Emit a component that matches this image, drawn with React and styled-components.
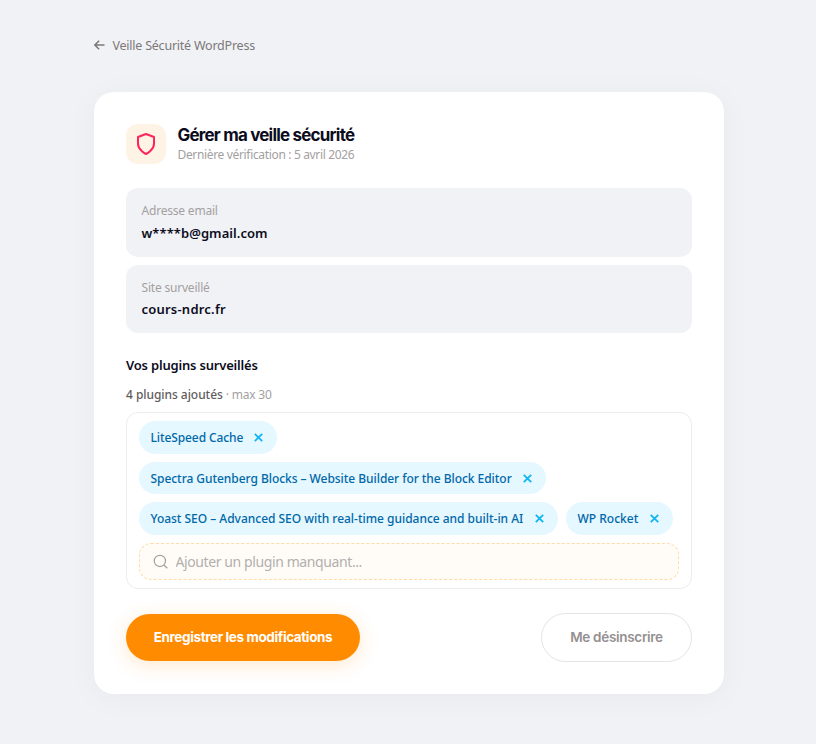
import React from "react";
import styled, { createGlobalStyle } from "styled-components";

const plugins = [
  { name: "LiteSpeed Cache", width: 138, spacing: -0.1 },
  {
    name: "Spectra Gutenberg Blocks – Website Builder for the Block Editor",
    width: 407,
    spacing: -0.05,
    top: 2,
  },
  {
    name: "Yoast SEO – Advanced SEO with real-time guidance and built-in AI",
    width: 419,
    spacing: -0.02,
    top: 1,
  },
  { name: "WP Rocket", width: 107, spacing: 0, top: 1 },
];

const fields = [
  { label: "Adresse email", value: "w****b@gmail.com", height: 69, gap: 2, spacing: 0.06 },
  { label: "Site surveillé", value: "cours-ndrc.fr", height: 68, gap: 1, spacing: 0.22 },
];

const App = () => {
  return (
    <>
      <GlobalStyle />
      <Page>
        <BackLink href="#">
          <ArrowIcon viewBox="0 0 12 12">
            <path d="M10.5 6H1M5.1 1.8L.9 6l4.2 4.2" />
          </ArrowIcon>
          <span>Veille Sécurité WordPress</span>
        </BackLink>

        <Card>
          <Header>
            <IconBox>
              <ShieldIcon viewBox="0 0 24 24">
                <path d="M12 22s8-4 8-10V5l-8-3-8 3v7c0 6 8 10 8 10z" />
              </ShieldIcon>
            </IconBox>
            <div>
              <Title>Gérer ma veille sécurité</Title>
              <Subtitle>Dernière vérification : 5 avril 2026</Subtitle>
            </div>
          </Header>

          <Fields>
            {fields.map((f) => (
              <Field key={f.label} $height={f.height}>
                <FieldLabel>{f.label}</FieldLabel>
                <FieldValue $gap={f.gap} $spacing={f.spacing}>
                  {f.value}
                </FieldValue>
              </Field>
            ))}
          </Fields>

          <SectionTitle>Vos plugins surveillés</SectionTitle>
          <Count>
            <strong>4 plugins ajoutés</strong> · max 30
          </Count>

          <PluginBox>
            {plugins.map((p) => (
              <Chip key={p.name} $width={p.width} $top={p.top}>
                <ChipName $spacing={p.spacing}>{p.name}</ChipName>
                <Remove aria-label="Retirer">
                  <svg width="9" height="9" viewBox="0 0 9 9">
                    <path d="M.8.8l7.4 7.4M8.2.8L.8 8.2" />
                  </svg>
                </Remove>
              </Chip>
            ))}
            <Search>
              <SearchIcon viewBox="0 0 24 24">
                <circle cx="11" cy="11" r="9" />
                <path d="M17.5 17.5L22.8 22.8" />
              </SearchIcon>
              <SearchInput placeholder="Ajouter un plugin manquant..." />
            </Search>
          </PluginBox>

          <Actions>
            <SaveButton>Enregistrer les modifications</SaveButton>
            <LeaveButton>Me désinscrire</LeaveButton>
          </Actions>
        </Card>
      </Page>
    </>
  );
};

export default App;

// ---------------- Styled Components ----------------
const GlobalStyle = createGlobalStyle`
  *, *::before, *::after {
    box-sizing: border-box;
  }
  body {
    margin: 0;
    background: #f1f2f6;
    font-family: "Noto Sans", "Open Sans", sans-serif;
    color: #0c0c1d;
  }
  button, input {
    font-family: inherit;
  }
`;

const Page = styled.main`
  width: 630px;
  min-height: 744px;
  margin: 0 92px 0 94px;
  padding-top: 35px;
`;

const BackLink = styled.a`
  display: flex;
  align-items: center;
  gap: 6.5px;
  height: 20px;
  margin-bottom: 37px;
  font-size: 12.5px;
  letter-spacing: -0.23px;
  color: #7c7878;
  text-decoration: none;
`;

const ArrowIcon = styled.svg`
  width: 12px;
  height: 12px;
  fill: none;
  stroke: currentColor;
  stroke-width: 1.5;
`;

const Card = styled.section`
  height: 602px;
  padding: 32px;
  border-radius: 20px;
  background: #fff;
  box-shadow: 0 4px 32px rgba(12, 12, 29, 0.04);
`;

const Header = styled.header`
  display: flex;
  align-items: center;
  gap: 11.5px;
  height: 40px;
  margin-bottom: 24px;
`;

const IconBox = styled.div`
  display: flex;
  align-items: center;
  justify-content: center;
  width: 40px;
  height: 40px;
  border-radius: 12px;
  background: #fff3e6;
`;

const ShieldIcon = styled.svg`
  width: 24px;
  height: 24px;
  fill: none;
  stroke: #ff2559;
  stroke-width: 2;
  stroke-linejoin: round;
`;

const Title = styled.h1`
  margin: 0;
  font-family: Inter, sans-serif;
  font-size: 17px;
  font-weight: 700;
  line-height: 21px;
  letter-spacing: -0.8px;
`;

const Subtitle = styled.p`
  margin: 0;
  font-size: 12px;
  line-height: 17px;
  letter-spacing: -0.34px;
  color: #a3a0a0;
`;

const Fields = styled.div`
  display: flex;
  flex-direction: column;
  gap: 8px;
  margin-bottom: 22px;
`;

const Field = styled.div`
  height: ${(p) => p.$height}px;
  padding: 13px 15.5px 0;
  border-radius: 12px;
  background: #f1f2f6;
`;

const FieldLabel = styled.div`
  font-size: 12px;
  line-height: 20px;
  letter-spacing: -0.2px;
  color: #a3a0a0;
`;

const FieldValue = styled.div`
  padding-top: ${(p) => p.$gap}px;
  font-size: 13px;
  font-weight: 600;
  line-height: 20px;
  letter-spacing: ${(p) => p.$spacing}px;
`;

const SectionTitle = styled.h2`
  margin: 0 0 10px;
  font-size: 13px;
  font-weight: 600;
  line-height: 20px;
  letter-spacing: -0.19px;
`;

const Count = styled.p`
  margin: 0 0 7px;
  font-size: 12px;
  line-height: 20px;
  letter-spacing: -0.2px;
  color: #a3a0a0;

  strong {
    font-weight: 500;
    letter-spacing: -0.05px;
    color: #5f5c5c;
  }
`;

const PluginBox = styled.div`
  display: flex;
  flex-wrap: wrap;
  gap: 8px;
  padding: 8px 12px;
  border: 1px solid #ededf0;
  border-radius: 12px;
`;

const Chip = styled.div`
  display: flex;
  align-items: center;
  justify-content: space-between;
  width: ${(p) => p.$width}px;
  height: 32.6px;
  padding: ${(p) => p.$top || 0}px 14.5px 0 11.5px;
  border-radius: 17px;
  background: #e5f7ff;
`;

const ChipName = styled.span`
  font-size: 12px;
  font-weight: 500;
  letter-spacing: ${(p) => p.$spacing}px;
  color: #0068a8;
  white-space: nowrap;
`;

const Remove = styled.button`
  display: flex;
  padding: 0;
  border: 0;
  background: none;

  svg {
    fill: none;
    stroke: #10b5f5;
    stroke-width: 1.8;
  }
`;

const Search = styled.label`
  display: flex;
  align-items: center;
  gap: 8px;
  width: 100%;
  height: 37px;
  padding: 0 12.5px;
  border: 1px dashed #ffdba8;
  border-radius: 12px;
  background: #fffcf7;
`;

const SearchIcon = styled.svg`
  flex: none;
  width: 15px;
  height: 15px;
  fill: none;
  stroke: #a3a0a0;
  stroke-width: 2;
`;

const SearchInput = styled.input`
  flex: 1;
  padding: 0;
  border: 0;
  outline: 0;
  background: none;
  font-size: 14px;
  letter-spacing: -0.4px;

  &::placeholder {
    color: #b3afaf;
    opacity: 1;
  }
`;

const Actions = styled.div`
  display: flex;
  align-items: center;
  justify-content: space-between;
  margin-top: 24px;
`;

const Button = styled.button`
  padding-bottom: 2px;
  font-family: Inter, sans-serif;
  font-size: 13.5px;
  font-weight: 600;
  border-radius: 25px;
  white-space: nowrap;
`;

const SaveButton = styled(Button)`
  width: 234px;
  height: 47px;
  border: 0;
  background: #ff8c00;
  color: #fff;
  font-weight: 700;
  letter-spacing: -0.38px;
  box-shadow: 0 4px 20px rgba(255, 140, 0, 0.2);
`;

const LeaveButton = styled(Button)`
  width: 151px;
  height: 49px;
  border: 1px solid #e4e4e7;
  background: #fff;
  color: #949090;
  letter-spacing: -0.3px;
`;
